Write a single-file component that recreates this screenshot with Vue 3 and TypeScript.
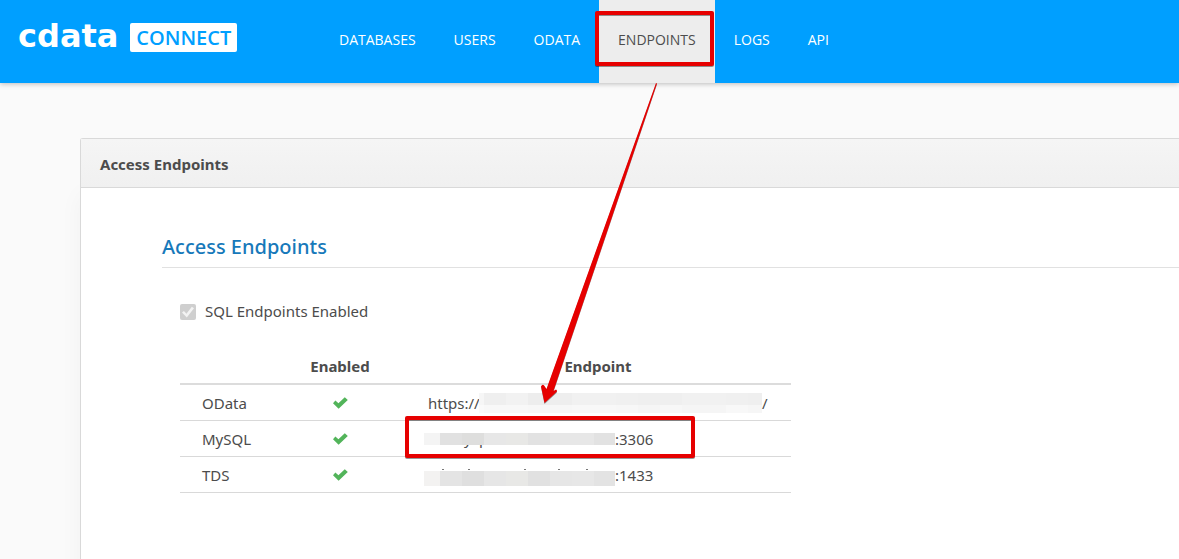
<script setup lang="ts">
import { ref } from 'vue'

interface NavItem {
  label: string
  active?: boolean
}

interface Block {
  x: number
  y: number
  w: number
  h: number
  fill: string
}

interface Endpoint {
  name: string
  prefix: string
  suffix: string
  maskClass: string
  maskWidth: number
  blocks: Block[]
  specks: number[]
  letters: { x: number; char: string }[]
}

const navItems: NavItem[] = [
  { label: 'DATABASES' },
  { label: 'USERS' },
  { label: 'ODATA' },
  { label: 'ENDPOINTS', active: true },
  { label: 'LOGS' },
  { label: 'API' },
]

const sqlEnabled = ref(true)

// Lays consecutive tiles of 22px after a first tile of its own width
function tiles(first: number, y: number, h: number, total: number, fills: string[]): Block[] {
  return fills.map((fill, i) => {
    const x = i === 0 ? 0 : first + (i - 1) * 22
    const end = Math.min(first + i * 22, total)
    return { x, y, w: end - x, h, fill }
  })
}

const endpoints: Endpoint[] = [
  {
    name: 'OData',
    prefix: 'https://',
    suffix: '/',
    maskClass: 'mask-url',
    maskWidth: 283,
    blocks: [
      ...tiles(5, 4, 12, 283, ['#f6f6f6', '#efefef', '#f2f2f2', '#ededed', '#eeeeee', '#f1f1f1', '#f1f1f1', '#f0f0f0', '#efefef', '#efefef', '#f1f1f1', '#f1f1f1', '#f0f0f0', '#efefef']),
      ...tiles(5, 16, 8, 283, ['#fafafa', '#f8f8f8', '#f8f8f8', '#f7f7f7', '#f7f7f7', '#f8f8f8', '#f8f8f8', '#f7f7f7', '#f5f5f5', '#f7f7f7', '#f5f5f5', '#f5f5f5', '#f8f8f8', '#f6f6f6']),
    ],
    specks: [],
    letters: [],
  },
  {
    name: 'MySQL',
    prefix: '',
    suffix: ':3306',
    maskClass: 'mask-host',
    maskWidth: 191,
    blocks: tiles(16, 8, 12, 191, ['#f4f4f4', '#e1e1e1', '#dededd', '#e7e7e7', '#e8e8e6', '#e2e2e2', '#e7e7e7', '#e7e7e7', '#e2e2e2']),
    specks: [],
    letters: [{ x: 40, char: 'y' }, { x: 55, char: 'p' }],
  },
  {
    name: 'TDS',
    prefix: '',
    suffix: ':1433',
    maskClass: 'mask-host',
    maskWidth: 191,
    blocks: tiles(16, 10, 15, 191, ['#f3f2f1', '#e4e4e4', '#dfdfdf', '#e6e6e6', '#e8e8e6', '#e1e1e1', '#e6e6e6', '#e7e7e7', '#e3e3e3']),
    specks: [18, 44, 100, 134, 162],
    letters: [],
  },
]
</script>

<template>
  <div class="page">
    <header class="topbar">
      <a class="brand" href="#">
        <span class="brand-name">cdata</span>
        <span class="brand-tag">CONNECT</span>
      </a>
      <nav class="nav">
        <a
          v-for="item in navItems"
          :key="item.label"
          href="#"
          class="nav-link"
          :class="{ active: item.active }"
        >{{ item.label }}</a>
      </nav>
    </header>

    <main class="panel">
      <h1 class="panel-title">Access Endpoints</h1>
      <div class="panel-body">
        <h2 class="section-title">Access Endpoints</h2>
        <div class="section">
          <label class="check">
            <input v-model="sqlEnabled" type="checkbox" disabled />
            <span>SQL Endpoints Enabled</span>
          </label>
          <table class="endpoints">
            <thead>
              <tr>
                <th class="col-name"></th>
                <th class="col-enabled" scope="col">Enabled</th>
                <th class="col-endpoint" scope="col">Endpoint</th>
              </tr>
            </thead>
            <tbody>
              <tr v-for="row in endpoints" :key="row.name">
                <td class="name">{{ row.name }}</td>
                <td class="enabled">
                  <svg class="tick" viewBox="0 0 16 12" role="img" aria-label="Enabled">
                    <path d="M1 6.2 3.400 3.600 6.400 6.200 12.800 .2 15.800 3 6.600 11.800z" />
                  </svg>
                </td>
                <td>
                  <div class="address">
                    <span v-if="row.prefix" class="scheme">{{ row.prefix }}</span>
                    <svg
                      :class="row.maskClass"
                      :width="row.maskWidth"
                      height="28"
                      aria-hidden="true"
                    >
                      <text v-for="l in row.letters" :key="l.x" :x="l.x" y="19">{{ l.char }}</text>
                      <rect
                        v-for="(b, i) in row.blocks"
                        :key="i"
                        :x="b.x"
                        :y="b.y"
                        :width="b.w"
                        :height="b.h"
                        :fill="b.fill"
                      />
                      <rect v-for="s in row.specks" :key="s" :x="s" y="8" width="2" height="1" fill="#777" />
                    </svg>
                    <span>{{ row.suffix }}</span>
                  </div>
                </td>
              </tr>
            </tbody>
          </table>
        </div>
      </div>
    </main>

    <svg class="callouts" width="800" height="480" viewBox="0 0 800 480" aria-hidden="true">
      <g class="callout-box">
        <rect x="597" y="13" width="115" height="51" />
        <rect x="407" y="418" width="286" height="38" />
      </g>
      <path
        class="callout-arrow"
        d="M656 83 657 83.500 553.500 391 556 389.500Q558 391 556 392.500L544.500 403 541 386.500Q542.500 383.500 544.500 386L546.500 389z"
      />
    </svg>
  </div>
</template>

<style>
body {
  margin: 0;
}
</style>

<style scoped>
.page {
  position: relative;
  display: flex;
  flex-direction: column;
  min-height: 100vh;
  overflow: hidden;
  background: #fafafa;
  color: #4c4c4c;
  font: 15px/20px "Noto Sans", "Open Sans", sans-serif;
}

.topbar {
  display: flex;
  height: 83px;
  background: #009fff;
  box-shadow: 0 1px 5px rgba(0, 0, 0, 0.25);
  font-family: "Open Sans", sans-serif;
}

.brand {
  display: flex;
  align-items: center;
  gap: 12px;
  width: 302px;
  height: 75px;
  padding-left: 18px;
  color: #fff;
  text-decoration: none;
}

.brand-name {
  padding-bottom: 4px;
  font: bold 32px/32px "DejaVu Sans", sans-serif;
}

.brand-tag {
  padding: 0 6px;
  border-radius: 2px;
  background: #fff;
  color: #009fff;
  font-size: 20px;
  font-weight: 600;
  line-height: 29px;
}

.nav {
  display: flex;
}

.nav-link {
  padding: 0 19px;
  color: #fff;
  font-size: 14px;
  line-height: 79px;
  text-decoration: none;
}

.nav-link.active {
  background: #ededed;
  color: #4c4c4c;
}

.panel {
  flex: 1;
  margin: 55px 0 0 80px;
  border: 1px solid #d9d9d9;
  border-width: 1px 0 0 1px;
  border-radius: 3px 0 0 0;
  background: #fff;
  box-shadow: 0 56px 24px rgba(0, 0, 0, 0.04);
}

.panel-title {
  margin: 0;
  padding: 15px 19px 13px;
  border-bottom: 1px solid #d9d9d9;
  background: linear-gradient(#f5f5f5, #f0f0f0);
  font-size: 15px;
  font-weight: 700;
  line-height: 20px;
}

.panel-body {
  padding: 45px 0 0 81px;
}

.section-title {
  margin: 0;
  padding-bottom: 6px;
  border-bottom: 1px solid #e1e1e1;
  color: #1779ba;
  font-size: 20px;
  font-weight: 500;
  line-height: 28px;
}

.section {
  padding: 33px 18px;
}

.check {
  display: flex;
  align-items: center;
  gap: 9px;
}

.check span {
  padding-bottom: 2px;
}

.check input {
  display: grid;
  place-items: center;
  width: 16px;
  height: 16px;
  margin: 0;
  border-radius: 2px;
  background: #cfcfcf;
  appearance: none;
}

.check input:checked::after {
  width: 12px;
  height: 12px;
  background: #f3f3f3;
  clip-path: polygon(0 55%, 16% 42%, 37% 64%, 82% 6%, 100% 18%, 40% 96%);
  content: "";
}

.endpoints {
  width: 611px;
  max-width: 100%;
  margin-top: 27px;
  border-collapse: collapse;
  table-layout: fixed;
}

.col-name {
  width: 95px;
}

.col-enabled {
  width: 130px;
}

.endpoints th {
  height: 31px;
  padding: 0 0 2px;
  border-bottom: 2px solid #dcdcdc;
  font-weight: 700;
}

.endpoints td {
  height: 35px;
  padding: 0;
  border-bottom: 1px solid #d9d9d9;
}

.endpoints td.name {
  padding-left: 22px;
}

.enabled {
  text-align: center;
}

.tick {
  display: inline-block;
  width: 16px;
  height: 12px;
  fill: #52b45a;
}

.address {
  display: flex;
  align-items: center;
  padding-left: 23px;
}

.scheme {
  width: 51px;
}

.address svg {
  flex: none;
}

.address text {
  fill: #4c4c4c;
}

.mask-host {
  margin-left: -4px;
}

.callouts {
  position: absolute;
  top: 0;
  left: 0;
  pointer-events: none;
  filter: drop-shadow(0 1px 0 rgba(0, 0, 0, 0.4));
}

.callout-box {
  fill: none;
  stroke: #e60000;
  stroke-width: 4px;
  stroke-linejoin: round;
}

.callout-arrow {
  fill: #e60000;
}
</style>
